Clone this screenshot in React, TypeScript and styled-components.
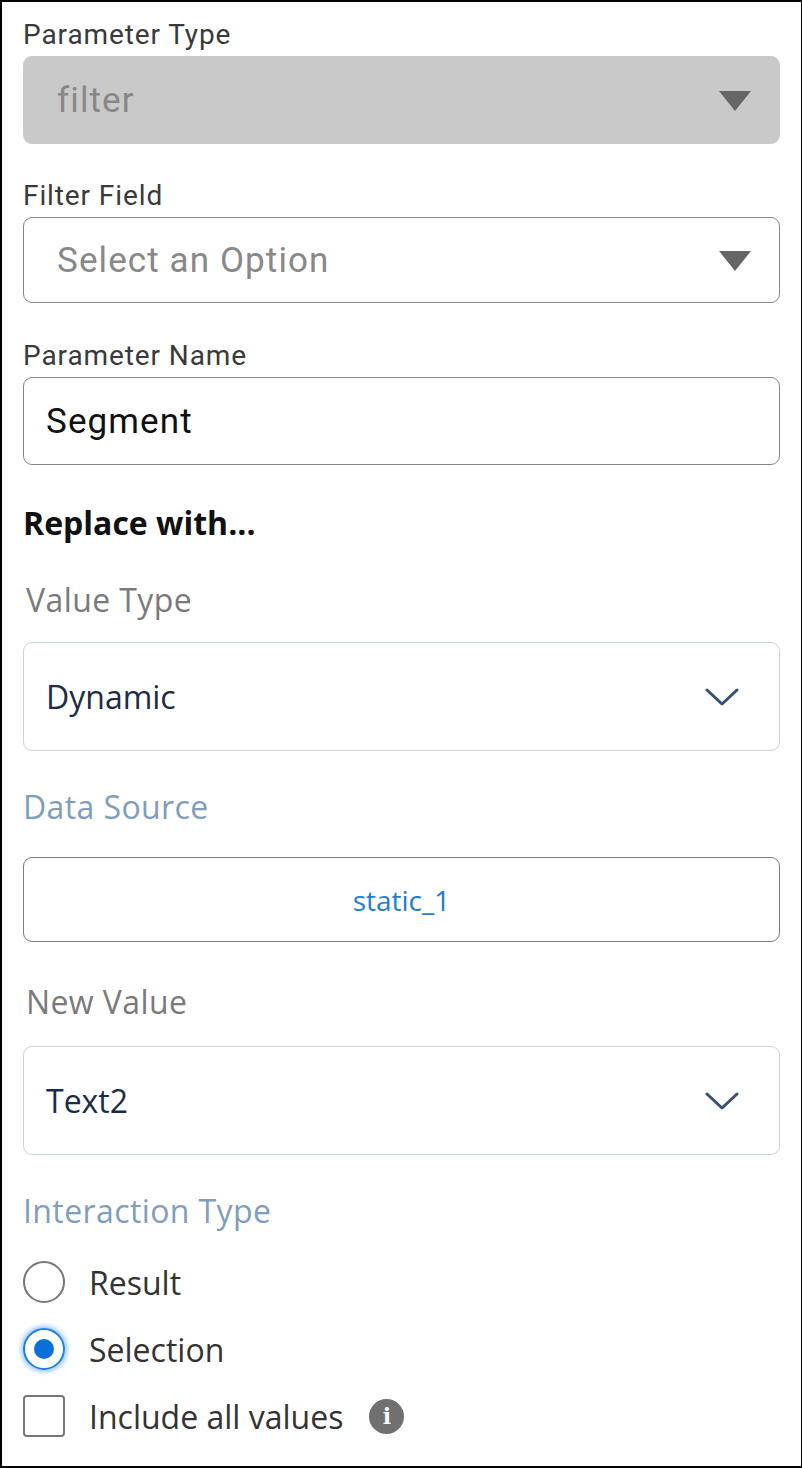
import React from "react";
import styled, { createGlobalStyle } from "styled-components";

const Global = createGlobalStyle`
  html, body { margin: 0; padding: 0; background: #fff; }
  body { font-family: Roboto, "Noto Sans", sans-serif; }
`;

const Frame = styled.div`
  box-sizing: border-box;
  width: 802px;
  height: 1468px;
  border: 2px solid #000;
  border-right: 1px solid #000;
  padding: 18px 21px 0 21px;
  display: flex;
  flex-direction: column;
`;

const SmallLabel = styled.div`
  font-size: 28px;
  letter-spacing: 0.9px;
  color: #3a3a3a;
  line-height: 30px;
  margin-bottom: 6px;
`;

const Field = styled.div<{ $disabled?: boolean; $h: number; $mb: number }>`
  box-sizing: border-box;
  height: ${(p) => p.$h}px;
  border-radius: 9px;
  border: 1.5px solid ${(p) => (p.$disabled ? "#c9c9c9" : "#858585")};
  background: ${(p) => (p.$disabled ? "#c9c9c9" : "#fff")};
  display: flex;
  align-items: center;
  justify-content: space-between;
  padding: 0 28px 0 33px;
  margin-bottom: ${(p) => p.$mb}px;
  font-size: 35px;
  letter-spacing: 1.1px;
  color: #888;
`;

const TextValue = styled.span`
  color: #111;
  margin-left: -11px;
`;

const Caret = styled.span`
  width: 0;
  height: 0;
  border-left: 16px solid transparent;
  border-right: 16px solid transparent;
  border-top: 20px solid #666;
  margin-top: 2px;
`;

const Heading = styled.div`
  font-family: "Open Sans", sans-serif;
  font-size: 32px;
  font-weight: 700;
  color: #111;
  margin: 36px 0 36px;
`;

const BigLabel = styled.div<{ $blue?: boolean }>`
  font-family: "Open Sans", sans-serif;
  font-size: 32px;
  letter-spacing: 0.4px;
  color: ${(p) => (p.$blue ? "#7f9ebd" : "#7a7a7a")};
  padding-left: ${(p) => (p.$blue ? 0 : 3)}px;
  line-height: 40px;
`;

const Select = styled.div<{ $mb: number }>`
  box-sizing: border-box;
  height: 109px;
  border: 1.5px solid #c9d3de;
  border-radius: 9px;
  display: flex;
  align-items: center;
  justify-content: space-between;
  padding: 0 40px 0 22px;
  font-family: "Open Sans", sans-serif;
  font-size: 32px;
  color: #1b2c4a;
  margin-bottom: ${(p) => p.$mb}px;
`;

const SourceBox = styled.div`
  box-sizing: border-box;
  height: 85px;
  border: 1.5px solid #7d7d7d;
  border-radius: 9px;
  display: flex;
  align-items: center;
  justify-content: center;
  font-family: "Open Sans", sans-serif;
  font-size: 28px;
  color: #1f7dd6;
  margin-bottom: 40px;
`;

const Option = styled.div`
  display: flex;
  align-items: center;
  gap: 24px;
  height: 42px;
  margin-bottom: 25px;
  font-family: "Open Sans", sans-serif;
  font-size: 32px;
  color: #333;
`;

const Radio = styled.span<{ $on?: boolean }>`
  box-sizing: border-box;
  width: 42px;
  height: 42px;
  border-radius: 50%;
  border: 2px solid ${(p) => (p.$on ? "#1a7fe8" : "#777")};
  display: flex;
  align-items: center;
  justify-content: center;
  box-shadow: ${(p) => (p.$on ? "0 0 5px 2px rgba(40,140,255,0.5)" : "none")};
  &::after {
    content: "";
    display: ${(p) => (p.$on ? "block" : "none")};
    width: 20px;
    height: 20px;
    border-radius: 50%;
    background: #0a6fd8;
  }
`;

const Check = styled.span`
  box-sizing: border-box;
  width: 42px;
  height: 42px;
  border-radius: 4px;
  border: 2px solid #777;
`;

const Info = styled.span`
  width: 35px;
  height: 35px;
  border-radius: 50%;
  background: #707070;
  color: #fff;
  font-family: "DejaVu Serif", serif;
  font-weight: 700;
  font-size: 22px;
  display: flex;
  align-items: center;
  justify-content: center;
  margin-left: 2px;
`;

const Spacer = styled.div<{ $h: number }>`
  height: ${(p) => p.$h}px;
`;

const Chevron = () => (
  <svg width="34" height="20" viewBox="0 0 34 20" fill="none">
    <path d="M2 3 L17 17 L32 3" stroke="#33507a" strokeWidth="3" strokeLinecap="round" strokeLinejoin="round" />
  </svg>
);

export default function App() {
  return (
    <>
      <Global />
      <Frame>
        <SmallLabel>Parameter Type</SmallLabel>
        <Field $disabled $h={88} $mb={37}>
          filter<Caret />
        </Field>
        <SmallLabel>Filter Field</SmallLabel>
        <Field $h={86} $mb={38}>
          Select an Option<Caret />
        </Field>
        <SmallLabel>Parameter Name</SmallLabel>
        <Field $h={88} $mb={0}>
          <TextValue>Segment</TextValue>
        </Field>
        <Heading>Replace with...</Heading>
        <BigLabel>Value Type</BigLabel>
        <Spacer $h={22} />
        <Select $mb={36}>
          Dynamic<Chevron />
        </Select>
        <BigLabel $blue>Data Source</BigLabel>
        <Spacer $h={30} />
        <SourceBox>static_1</SourceBox>
        <BigLabel>New Value</BigLabel>
        <Spacer $h={24} />
        <Select $mb={36}>
          Text2<Chevron />
        </Select>
        <BigLabel $blue>Interaction Type</BigLabel>
        <Spacer $h={30} />
        <Option>
          <Radio />
          Result
        </Option>
        <Option>
          <Radio $on />
          Selection
        </Option>
        <Option>
          <Check />
          Include all values
          <Info>i</Info>
        </Option>
      </Frame>
    </>
  );
}
